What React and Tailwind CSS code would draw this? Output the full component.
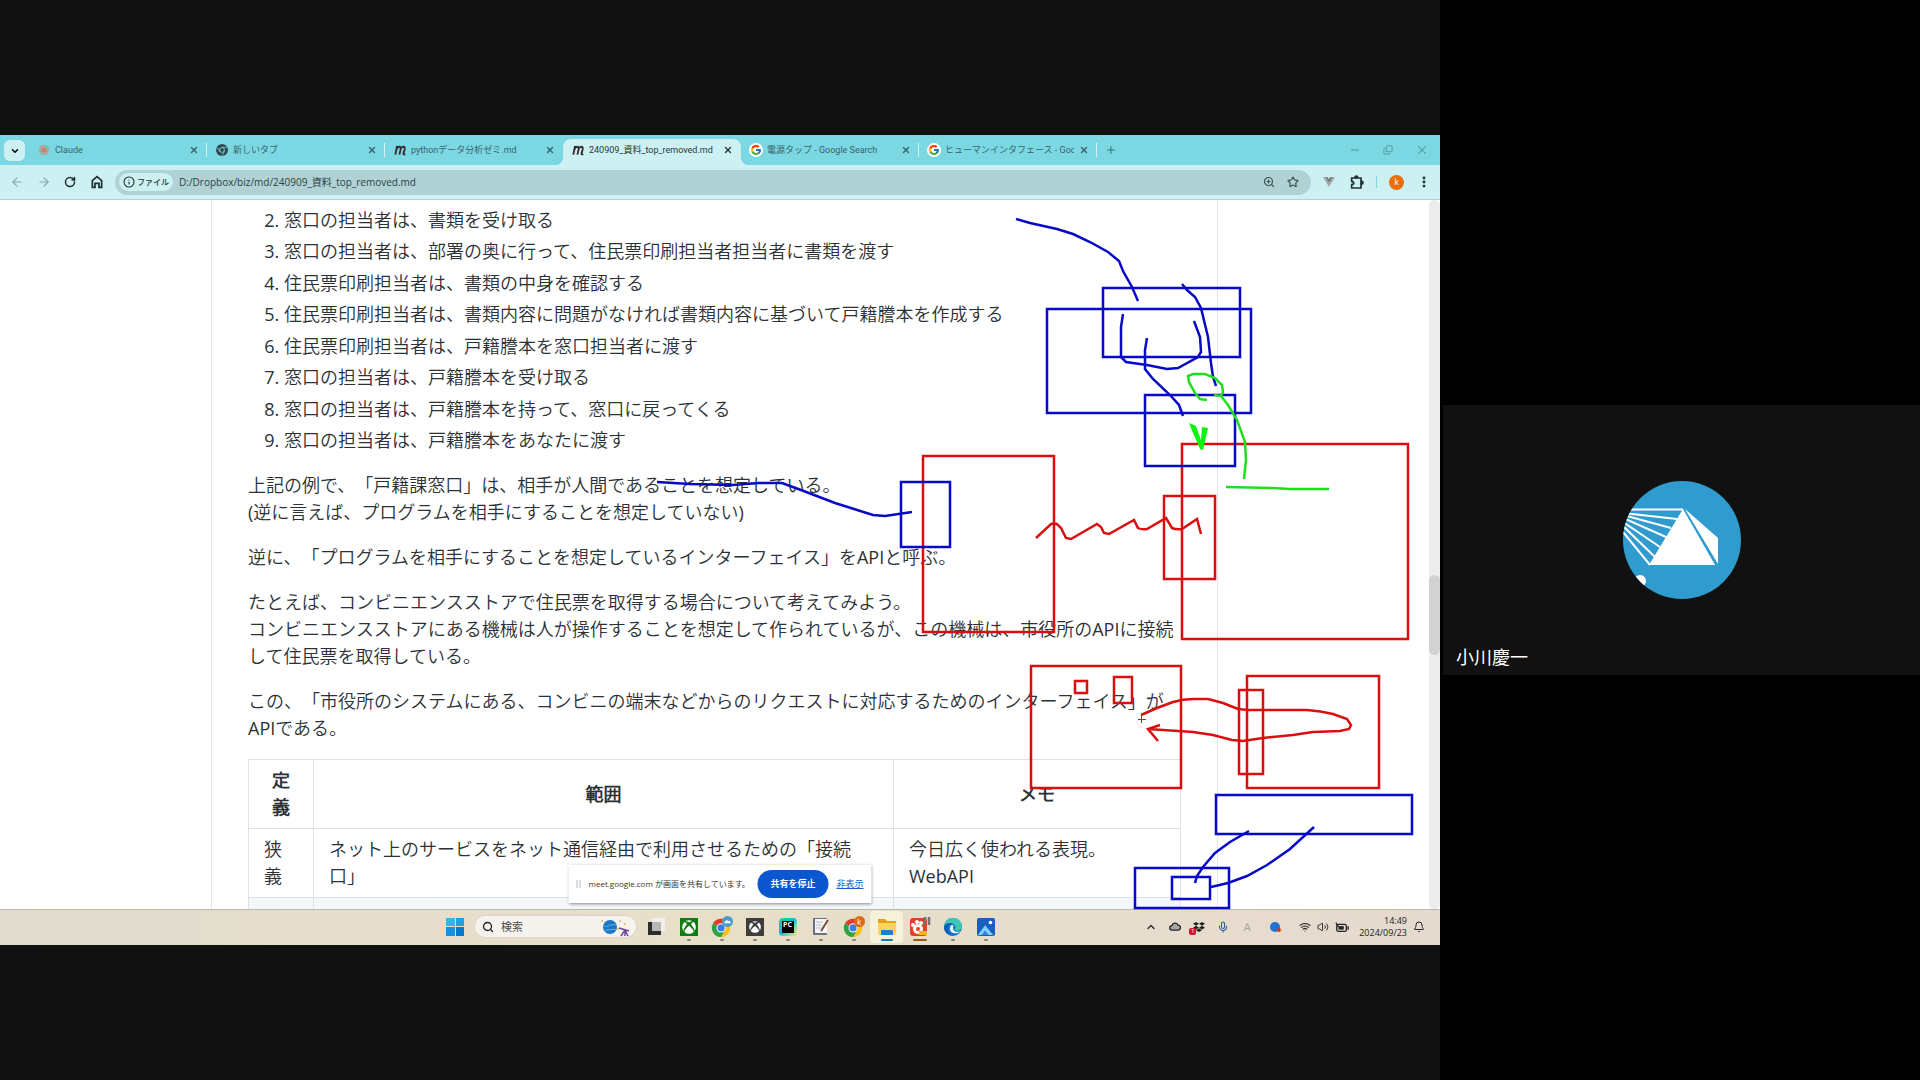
import React from "react";
import {
  ArrowLeft,
  ArrowRight,
  Bell,
  ChevronDown,
  ChevronUp,
  Copy,
  EllipsisVertical,
  Info,
  Mic,
  Minus,
  Plus,
  RotateCw,
  Search,
  Star,
  Volume2,
  Wifi,
  X,
  ZoomIn,
} from "lucide-react";
import { FcGoogle } from "react-icons/fc";
import { FaDropbox, FaXbox } from "react-icons/fa";

const steps = [
  "窓口の担当者は、書類を受け取る",
  "窓口の担当者は、部署の奥に行って、住民票印刷担当者担当者に書類を渡す",
  "住民票印刷担当者は、書類の中身を確認する",
  "住民票印刷担当者は、書類内容に問題がなければ書類内容に基づいて戸籍謄本を作成する",
  "住民票印刷担当者は、戸籍謄本を窓口担当者に渡す",
  "窓口の担当者は、戸籍謄本を受け取る",
  "窓口の担当者は、戸籍謄本を持って、窓口に戻ってくる",
  "窓口の担当者は、戸籍謄本をあなたに渡す",
];

const ClaudeIcon = () => (
  <svg viewBox="0 0 24 24" className="size-3 text-[#d3775a]">
    <path
      d="M12 1v22M1 12h22M4 4l16 16M20 4L4 20M7.500 2l9 20M16.500 2l-9 20M2 7.500l20 9M2 16.500l20-9"
      stroke="currentColor"
      strokeWidth="1.500"
    />
  </svg>
);

const ChromeMono = () => (
  <svg viewBox="0 0 24 24" className="size-3">
    <circle cx="12" cy="12" r="12" fill="#30484c" />
    <circle cx="12" cy="12" r="5.5" fill="#7bd8e2" />
    <circle cx="12" cy="12" r="3.8" fill="#30484c" />
    <path d="M12 6.5h10M7 15L2 6.5M17 15l-5 8.5" stroke="#7bd8e2" strokeWidth="1.5" />
  </svg>
);

const MarkdownIcon = () => (
  <svg viewBox="0 0 24 24" className="size-3.5">
    <path
      d="M4 20L7 5M6 11c2-5 8-7 7 0l-2 9M12.500 11c2-5 9-7 7.500 0l-2 7c0 2 1 2 3 1"
      fill="none"
      stroke="#332c30"
      strokeWidth="3.2"
    />
  </svg>
);

const GoogleIcon = () => (
  <span className="flex size-3.5 items-center justify-center rounded-full bg-white">
    <FcGoogle className="size-3" />
  </span>
);

const tabs = [
  { title: "Claude", icon: <ClaudeIcon /> },
  { title: "新しいタブ", icon: <ChromeMono /> },
  { title: "pythonデータ分析ゼミ.md", icon: <MarkdownIcon /> },
  { title: "240909_資料_top_removed.md", icon: <MarkdownIcon />, active: true },
  { title: "電源タップ - Google Search", icon: <GoogleIcon /> },
  { title: "ヒューマンインタフェース - Google Search", icon: <GoogleIcon /> },
];

const Tab = ({ tab, divider }) => (
  <div
    className={`relative flex h-[26px] w-[178px] items-center gap-1 pr-[7px] pb-1 pl-2 ${
      tab.active ? "rounded-t-lg bg-[#cdf0f3] text-[#26383b]" : "text-[#37626a]"
    }`}
  >
    {tab.active && (
      <>
        <span className="absolute bottom-0 -left-2 size-2 bg-[radial-gradient(circle_at_0_0,transparent_8px,#cdf0f3_8px)]" />
        <span className="absolute -right-2 bottom-0 size-2 bg-[radial-gradient(circle_at_100%_0,transparent_8px,#cdf0f3_8px)]" />
      </>
    )}
    <span className="flex w-3.5 shrink-0 justify-center">{tab.icon}</span>
    <span className="min-w-0 flex-1 overflow-hidden font-['Roboto','Noto_Sans_CJK_JP',sans-serif] text-[9px] leading-4 whitespace-nowrap">
      {tab.title}
    </span>
    <button aria-label={`${tab.title} を閉じる`} className="flex w-3 shrink-0 justify-center">
      <X className="size-2.5" strokeWidth={3.2} />
    </button>
    {divider && <span className="absolute right-0 h-3.5 w-px bg-[#d5f4f6]" />}
  </div>
);

const TabStrip = () => (
  <div className="flex h-[30px] shrink-0 items-end bg-[#7bd8e2] pl-1">
    <button
      aria-label="タブを検索"
      className="mb-1 flex size-[21px] items-center justify-center rounded-md bg-[#cdf0f3]"
    >
      <ChevronDown className="size-2.5" strokeWidth={3.5} />
    </button>
    <div className="flex pl-1">
      {tabs.map((tab, i) => (
        <Tab key={tab.title} tab={tab} divider={i !== 2 && i !== 3} />
      ))}
    </div>
    <button aria-label="新しいタブ" className="mb-[9px] ml-2 text-[#37717a]">
      <Plus className="size-3" />
    </button>
    <div className="mb-2 ml-auto flex items-center gap-[22px] pr-[11px] text-[#4b949d]">
      <button aria-label="最小化">
        <Minus className="size-3" strokeWidth={2} />
      </button>
      <button aria-label="元に戻す">
        <Copy className="size-2.5 -scale-y-100" strokeWidth={2} />
      </button>
      <button aria-label="閉じる">
        <X className="size-3.5" strokeWidth={1.8} />
      </button>
    </div>
  </div>
);

const Toolbar = () => (
  <div className="flex h-[35px] shrink-0 items-center border-b border-[#b5d3d6] bg-[#cdf0f3] pl-[10px] text-[#1f3033]">
    <div className="flex items-center gap-[13px]">
      <button aria-label="戻る" className="text-[#84a7ab]">
        <ArrowLeft className="size-3.5" strokeWidth={2} />
      </button>
      <button aria-label="進む" className="text-[#84a7ab]">
        <ArrowRight className="size-3.5" strokeWidth={2} />
      </button>
      <button aria-label="再読み込み">
        <RotateCw className="size-3" strokeWidth={3} />
      </button>
      <button aria-label="ホーム">
        <svg viewBox="0 0 24 24" className="size-4" fill="none" stroke="currentColor" strokeWidth="2.6">
          <path d="M5 20V10l7-6 7 6v10h-4v-6H9v6z" />
        </svg>
      </button>
    </div>
    <div className="ml-2.5 flex h-[25px] flex-1 items-center rounded-full bg-[#b0d2d5] pr-3 pl-1">
      <button className="flex h-[18px] items-center gap-0.5 rounded-full bg-[#cdf0f3] px-1 text-[8px] font-medium">
        <Info className="size-3" strokeWidth={2.2} />
        ファイル
      </button>
      <input
        aria-label="アドレス"
        defaultValue="D:/Dropbox/biz/md/240909_資料_top_removed.md"
        className="ml-1.5 min-w-0 flex-1 bg-transparent text-[10px] leading-4 text-[#2b4145] outline-none"
      />
      <button aria-label="ズーム" className="mr-3">
        <ZoomIn className="size-3 text-[#3d5559]" strokeWidth={2.4} />
      </button>
      <button aria-label="ブックマーク">
        <Star className="size-3 text-[#3d5559]" strokeWidth={2.4} />
      </button>
    </div>
    <div className="flex items-center pr-[9px] pl-3">
      <button aria-label="Vue devtools">
        <svg viewBox="0 0 24 20" className="h-2.5 w-3">
          <path d="M0 0h5l7 12 7-12h5L12 20z" fill="#9fa9ab" />
          <path d="M5 0h4.500L12 4.500 14.500 0H19l-7 12z" fill="#7f7577" />
        </svg>
      </button>
      <button aria-label="拡張機能" className="ml-[14px]">
        <svg viewBox="0 0 24 24" className="size-4" fill="none" stroke="currentColor" strokeWidth="2.500">
          <path d="M4 6h14v15H4v-5c4 0 4-5 0-5z" />
          <path d="M9 5a2 2 0 0 1 4 0zM19 11a2 2 0 0 1 0 4z" fill="currentColor" />
        </svg>
      </button>
      <span className="ml-[11px] h-3 w-px bg-[#7bd8e2]" />
      <button className="ml-3 flex size-[15px] items-center justify-center rounded-full bg-[#ea6d0a] text-[9px] leading-3 text-white">
        k
      </button>
      <button aria-label="メニュー" className="ml-[13px]">
        <EllipsisVertical className="size-3.5" strokeWidth={3} />
      </button>
    </div>
  </div>
);

const cell = "border border-[#dfe2e5] px-[15px] py-[7px]";

const Article = () => (
  <article className="mx-auto h-full max-w-[1007px] border-x border-[#e1e4e8] bg-white px-9 pt-[7px] font-['Open_Sans','Noto_Sans_CJK_JP_DemiLight','Noto_Sans_CJK_JP',sans-serif] text-[18px] leading-[27px] text-[#2c3136] [text-spacing-trim:space-all]">
    <ol start={2} className="mb-[18px] list-decimal pl-9">
      {steps.map((step) => (
        <li key={step} className="not-first:even:pt-1 not-first:odd:pt-[5px]">
          {step}
        </li>
      ))}
    </ol>
    <p className="mb-[18px]">
      上記の例で、「戸籍課窓口」は、相手が人間であることを想定している。
      <br />
      (逆に言えば、プログラムを相手にすることを想定していない)
    </p>
    <p className="mb-[18px]">
      逆に、「プログラムを相手にすることを想定しているインターフェイス」をAPIと呼ぶ。
    </p>
    <p className="mb-[18px]">
      たとえば、コンビニエンスストアで住民票を取得する場合について考えてみよう。
      <br />
      コンビニエンスストアにある機械は人が操作することを想定して作られているが、この機械は、市役所のAPIに接続して住民票を取得している。
    </p>
    <p className="mb-[17px]">
      この、「市役所のシステムにある、コンビニの端末などからのリクエストに対応するためのインターフェイス」がAPIである。
    </p>
    <table className="w-full table-fixed border-collapse">
      <thead>
        <tr>
          <th className={`w-[65px] font-bold ${cell}`}>定義</th>
          <th className={`font-bold ${cell}`}>範囲</th>
          <th className={`w-[287px] font-bold ${cell}`}>メモ</th>
        </tr>
      </thead>
      <tbody>
        <tr>
          <td className={cell}>狭義</td>
          <td className={cell}>
            ネット上のサービスをネット通信経由で利用させるための「接続口」
          </td>
          <td className={cell}>
            今日広く使われる表現。
            <br />
            WebAPI
          </td>
        </tr>
        <tr className="h-[68px] bg-[#f3f7fa]">
          <td className={cell} />
          <td className={cell} />
          <td className={cell} />
        </tr>
      </tbody>
    </table>
  </article>
);

const ShareBar = () => (
  <div className="absolute bottom-1.5 left-1/2 flex h-[38px] w-[303px] -translate-x-1/2 items-center bg-white pl-2 text-[8px] leading-4 whitespace-nowrap text-[#333] shadow-[0_1px_3px_rgba(0,0,0,0.45)]">
    <span className="h-2 w-1 border-x border-[#b5b5b5]" />
    <span className="ml-2 flex-1">meet.google.com が画面を共有しています。</span>
    <button className="h-7 w-[71px] rounded-full bg-[#0b57d0] text-[9px] font-bold text-white">
      共有を停止
    </button>
    <a href="#hide" className="mr-2 ml-2 text-[9px] text-[#1a5fc0] underline">
      非表示
    </a>
  </div>
);

// Pen strokes drawn over the shared screen
const PenStrokes = () => (
  <svg
    viewBox="0 135 1440 810"
    className="pointer-events-none absolute inset-0 size-full"
    fill="none"
    strokeWidth="2.500"
  >
    <g stroke="#d90f0f">
      <rect x="923" y="456" width="131" height="176" />
      <rect x="1182" y="444" width="226" height="195" />
      <rect x="1164" y="496" width="51" height="83" />
      <rect x="1031" y="666" width="150" height="122" />
      <rect x="1075" y="681" width="12" height="12" />
      <rect x="1114" y="677" width="18" height="26" />
      <rect x="1247" y="676" width="132" height="112" />
      <rect x="1239" y="690" width="24" height="84" />
      <path d="M1036 538L1051 524Q1054 523 1057 524L1061 528L1066 538L1071 539L1097 524L1101 527L1104 533L1109 534L1134 520L1138 528Q1142 530 1147 529L1166 518L1172 528Q1177 530 1182 529L1197 519L1201 534" />
      <path d="M1141 715L1157 708L1173 702Q1183 699 1193 699L1208 699L1223 703L1238 709L1248 710L1307 710Q1321 711 1333 714L1347 719L1351 725L1349 729L1340 731L1313 732L1293 735L1263 738L1243 741L1232 740L1213 735L1193 732L1148 729" />
      <path d="M1160 725L1148 729L1158 741" />
      <path d="M1141.500 715v8M1138 719.500h8" strokeWidth="1" />
    </g>
    <g stroke="#0808c8">
      <rect x="1103" y="288" width="137" height="69" />
      <rect x="1047" y="309" width="204" height="104" />
      <rect x="1145" y="395" width="90" height="71" />
      <rect x="901" y="482" width="49" height="65" />
      <rect x="1216" y="795" width="196" height="39" />
      <rect x="1135" y="868" width="94" height="40" />
      <rect x="1172" y="877" width="38" height="22" />
      <path d="M1016 219L1030 223L1057 229L1073 234L1090 242L1108 252L1119 261L1123 271L1132 287L1138 301" />
      <path d="M1123 314L1121 327L1121 357L1126 362L1147 365L1167 369L1178 368L1198 357L1201 352L1200 337L1194 321" />
      <path d="M1182 284L1187 290L1195 297L1201 308L1208 337L1211 363L1213 377L1216 386" />
      <path d="M1147 338L1145 350L1145 369L1153 379L1170 395L1179 405L1183 416" />
      <path d="M657 482L690 484L732 485L759 483L782 483L801 490L835 503L854 509L873 515L885 516L912 512" />
      <path d="M1249 831L1230 842L1215 853L1203 867L1197 876L1195 883" />
      <path d="M1314 827L1290 849L1267 865L1247 876L1228 883L1211 887" />
    </g>
    <g stroke="#1fdd1f">
      <path d="M1207 400L1200 399L1195 393L1189 382L1188 376L1193 374L1205 374L1215 378L1222 385L1223 392L1221 396L1214 395" />
      <path d="M1221 396L1228 405L1237 420L1245 442L1246 460L1244 479" />
      <path d="M1226 487L1273 488L1290 489L1329 489" />
      <path d="M1189 423L1196 426L1201 440L1202 427L1208 428L1203 450L1200 449L1193 433Z" fill="#0cf50c" stroke="none" />
    </g>
  </svg>
);

const ChromeIcon = ({ children }) => (
  <svg viewBox="0 0 24 24" className="size-[22px]">
    <g transform="translate(1 3)">
      <circle cx="10" cy="10" r="10" fill="#fbc116" />
      <path d="M10 10L1.300 5A10 10 0 0 1 18.700 5z" fill="#e33b2e" />
      <path d="M10 10L1.300 5A10 10 0 0 0 10 20l4.500-8z" fill="#2ba24c" />
      <circle cx="10" cy="10" r="5" fill="#fff" />
      <circle cx="10" cy="10" r="3.900" fill="#3b7ded" />
    </g>
    {children}
  </svg>
);

const apps = [
  {
    name: "タスク ビュー",
    idle: true,
    icon: (
      <svg viewBox="0 0 20 20" className="size-5">
        <rect x="2" y="5" width="13" height="13" fill="#2b2b2b" />
        <rect x="6" y="1" width="13" height="13" fill="#f1f1f1" fillOpacity="0.85" />
        <rect x="6" y="5" width="9" height="9" fill="#b7b7b7" />
      </svg>
    ),
  },
  {
    name: "Xbox",
    icon: (
      <span className="flex size-[18px] items-center justify-center bg-[#107c10]">
        <FaXbox className="size-3.5 text-white" />
      </span>
    ),
  },
  {
    name: "Chrome",
    icon: (
      <ChromeIcon>
        <circle cx="18" cy="6" r="6" fill="#4a9cc9" />
        <path d="M14 8l3-4 2 2 1-1 2 3z" fill="#fff" />
      </ChromeIcon>
    ),
  },
  {
    name: "Xbox Game Bar",
    icon: (
      <span className="flex size-[18px] items-center justify-center bg-[#3c3c3c]">
        <FaXbox className="size-3 text-white" />
      </span>
    ),
  },
  {
    name: "PyCharm",
    icon: (
      <span className="flex size-[18px] items-center justify-center rounded-sm bg-linear-to-br from-[#21d789] via-[#12b8d8] to-[#e6f34a]">
        <span className="size-3 bg-black text-center text-[7px] leading-2 font-bold text-white">
          PC
        </span>
      </span>
    ),
  },
  {
    name: "メモ",
    icon: (
      <svg viewBox="0 0 20 20" className="size-5">
        <rect x="2" y="1" width="14" height="17" rx="1" fill="#6b6f86" />
        <rect x="4" y="2" width="12" height="14" fill="#f5f5f8" />
        <path d="M5 5h7M5 8h6M5 11h5" stroke="#b5b8c8" />
        <path d="M17 3l-7 11" stroke="#7a4a2b" strokeWidth="2" />
      </svg>
    ),
  },
  {
    name: "Chrome k",
    icon: (
      <ChromeIcon>
        <circle cx="18" cy="6" r="6" fill="#dd6a12" />
        <path d="M16.500 3v6M19.500 5l-3 2.500 3 2" stroke="#fff" fill="none" />
      </ChromeIcon>
    ),
  },
  {
    name: "エクスプローラー",
    current: true,
    icon: (
      <svg viewBox="0 0 20 20" className="size-5">
        <path d="M1 2h7l2 2h8a1 1 0 0 1 1 1v12H1z" fill="#e0a21a" />
        <path d="M1 6h18v11a1 1 0 0 1-1 1H2a1 1 0 0 1-1-1z" fill="#ffd45a" />
        <path d="M4 18v-4a1 1 0 0 1 1-1h10a1 1 0 0 1 1 1v4z" fill="#1a7fd0" />
      </svg>
    ),
  },
  {
    name: "キャプチャ",
    alert: true,
    icon: (
      <svg viewBox="0 0 22 20" className="h-5 w-[22px]">
        <rect x="1" y="1" width="17" height="18" rx="3" fill="#e2402b" />
        <circle cx="9" cy="12" r="5" fill="#fff" />
        <circle cx="4" cy="8" r="2" fill="#fff" />
        <circle cx="8" cy="5" r="2" fill="#fff" />
        <circle cx="12" cy="6" r="2" fill="#fff" />
        <circle cx="9" cy="12" r="2" fill="#e2402b" />
        <rect x="10" y="14" width="8" height="4" fill="#f6b21b" />
        <path d="M16 0v8M20 0v8" stroke="#77716f" strokeWidth="2.500" />
      </svg>
    ),
  },
  {
    name: "Edge",
    icon: (
      <svg viewBox="0 0 20 20" className="size-[18px]">
        <circle cx="10" cy="10" r="10" fill="#1377c8" />
        <path d="M0 10A10 10 0 0 1 20 9c0 4-3 6-6 5-3 0-2-2-1-3 0-3-2-5-5-5-4 0-7 2-8 4z" fill="#3cc6b4" />
        <path d="M8 8c-3 3-1 9 4 9 3 0 5-1 6-2-3 1-8 0-8-4 0-1 0-2 1-3z" fill="#eaf4fa" />
        <path d="M0 10c1-4 7-6 10-3-4-1-7 2-6 6s4 7 7 7C5 20 0 16 0 10z" fill="#0f5bb0" />
      </svg>
    ),
  },
  {
    name: "フォト",
    icon: (
      <svg viewBox="0 0 20 20" className="size-[18px]">
        <rect width="20" height="20" rx="2" fill="#1c5fc4" />
        <path d="M1 19L9 8l9 11z" fill="#7fd1f7" />
        <path d="M5 19l4-5 4 5z" fill="#2c86e0" />
        <circle cx="15" cy="5" r="2" fill="#fff" />
      </svg>
    ),
  },
];

const indicator = (app) => {
  if (app.idle) return "w-1 bg-transparent";
  if (app.current) return "w-3 bg-[#1a78b4]";
  if (app.alert) return "w-3.5 bg-[#9a5a10]";
  return "w-1 bg-[#8b8480]";
};

const Taskbar = () => (
  <div className="relative flex h-9 shrink-0 items-center border-t border-[#bdb9a8] bg-linear-to-r from-[#e2dcd0] via-[#e8dfc8] to-[#e6dad0] pb-0.5 text-[#222]">
    <div className="flex flex-1 items-center pl-[446px]">
      <button aria-label="スタート" className="grid size-[18px] grid-cols-2 gap-px">
        <span className="bg-[#35b5ee]" />
        <span className="bg-[#1f9fe4]" />
        <span className="bg-[#1591dd]" />
        <span className="bg-[#0878cf]" />
      </button>
      <label className="ml-2.5 flex h-[23px] w-[163px] items-center rounded-full border border-[#ddd5cb] bg-[#f6f3ee] pr-0.5 pl-[7px]">
        <Search className="size-3 shrink-0" strokeWidth={2.6} />
        <input
          aria-label="検索"
          placeholder="検索"
          className="ml-[7px] min-w-0 flex-1 bg-transparent text-[11px] leading-4 outline-none placeholder:text-[#4c4c4c]"
        />
        <svg viewBox="0 0 34 20" className="h-5 w-[34px] shrink-0">
          <circle cx="10" cy="10" r="7" fill="#1c78c4" />
          <path d="M4 9c4 2 7-3 12-1M5 13c4 1 6-2 11 0" stroke="#5fb3ea" fill="none" />
          <path d="M19 11l10 3M25 13l-4 6M25 13l3 6M25 13v6" stroke="#6b4a9c" strokeWidth="1.500" />
          <g fill="#e8b64c">
            <circle cx="2" cy="4" r="1" />
            <circle cx="20" cy="4" r="1" />
            <circle cx="18" cy="12" r="1" />
            <circle cx="25" cy="7" r="1" />
          </g>
        </svg>
      </label>
      <div className="ml-0.5 flex">
        {apps.map((app) => (
          <button
            key={app.name}
            aria-label={app.name}
            className={`relative flex h-8 w-[33px] items-center justify-center rounded ${
              app.current ? "bg-[#f6f2da]" : ""
            }`}
          >
            {app.icon}
            <span className={`absolute bottom-0.5 h-0.5 rounded-full ${indicator(app)}`} />
          </button>
        ))}
      </div>
    </div>
    <div className="flex items-center pr-[15px]">
      <ChevronUp className="size-3" strokeWidth={2.4} />
      <svg viewBox="0 0 24 18" className="ml-3 h-[9px] w-3">
        <path d="M6 16a4.500 4.500 0 0 1 0-9 6.500 6.500 0 0 1 12-1 5 5 0 0 1 0 10z" fill="#a6a6a6" stroke="#222" strokeWidth="2.500" />
      </svg>
      <span className="relative ml-3 flex">
        <FaDropbox className="size-3" />
        <span className="absolute -bottom-0.5 -left-1 size-[7px] rounded-xs bg-[#d3142c] text-center text-[6px] leading-[7px] text-white">
          1
        </span>
      </span>
      <Mic className="ml-3 size-3 text-[#2d5d9f]" strokeWidth={2.2} />
      <span className="ml-3 w-3 text-center text-[11px] leading-4 text-[#aaa39d]">A</span>
      <svg viewBox="0 0 14 12" className="ml-4 h-3 w-3.5">
        <circle cx="6" cy="6" r="5" fill="#1f74cf" />
        <circle cx="10" cy="9" r="2" fill="#d8301f" />
        <circle cx="12" cy="10" r="1" fill="#f2b51b" />
      </svg>
      <Wifi className="ml-4 size-3" strokeWidth={2.2} />
      <Volume2 className="ml-1.5 size-3" strokeWidth={1.8} />
      <svg viewBox="0 0 16 12" className="ml-1.5 h-3 w-3.5" fill="none" stroke="#222" strokeWidth="1.500">
        <rect x="2" y="3" width="11" height="8" rx="2" />
        <path d="M15 5v4M1 1l3 5" />
        <rect x="4" y="5" width="6" height="4" fill="#222" stroke="none" />
      </svg>
      <div className="ml-2.5 text-right text-[9px] leading-3">
        <div>14:49</div>
        <div>2024/09/23</div>
      </div>
      <Bell className="ml-1.5 size-3" strokeWidth={2} />
    </div>
  </div>
);

const SharedScreen = () => (
  <section className="relative flex aspect-video w-full flex-col overflow-hidden bg-white">
    <TabStrip />
    <Toolbar />
    <main className="relative flex min-h-0 flex-1 overflow-hidden">
      <div className="min-w-0 flex-1">
        <Article />
      </div>
      <div className="flex w-[11px] flex-col rounded-full bg-[#ececec]">
        <div className="grow-[375]" />
        <div className="h-20 rounded-full bg-[#d2d2d2]" />
        <div className="grow-[254]" />
      </div>
      <ShareBar />
    </main>
    <Taskbar />
    <PenStrokes />
  </section>
);

const Participant = () => (
  <section className="relative ml-[3px] flex h-[270px] flex-1 items-center justify-center bg-[#111]">
    <svg viewBox="0 0 118 118" className="size-[118px] overflow-hidden rounded-full">
      <rect width="118" height="118" fill="#309bcf" />
      <path d="M60 28L26 84h66z" fill="#fff" />
      <path d="M62 28l33 29v26z" fill="#fff" />
      <g stroke="#fff" strokeWidth="2" fill="none">
        <path d="M0 28.500h60M0 32l54 6M0 34l48 13M0 37l43 19M0 41l37 25M0 45l32 31M0 51l27 33" />
      </g>
      <circle cx="17" cy="100" r="6" fill="#fff" />
    </svg>
    <span className="absolute bottom-1 left-[13px] text-[18px] leading-[27px] text-white">
      小川慶一
    </span>
  </section>
);

const App = () => (
  <div className="flex min-h-screen bg-black font-['Open_Sans','Noto_Sans_CJK_JP',sans-serif]">
    <div className="flex w-3/4 items-center bg-[#111]">
      <SharedScreen />
    </div>
    <div className="flex flex-1 items-center">
      <Participant />
    </div>
  </div>
);

export default App;
